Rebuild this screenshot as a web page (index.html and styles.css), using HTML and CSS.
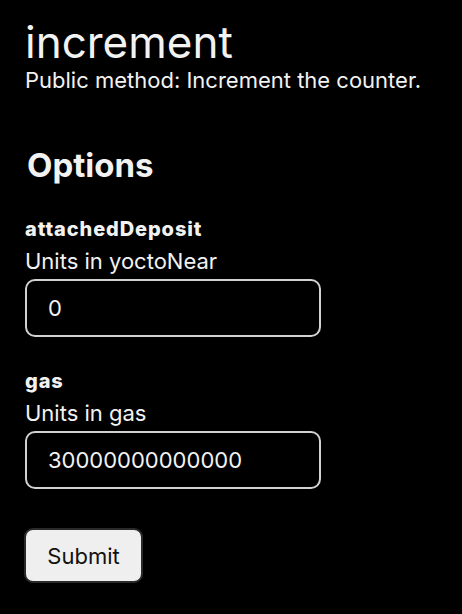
FILE: index.html
```html
<!DOCTYPE html>
<html>
<head>
<meta charset="utf-8">
<link rel="stylesheet" href="styles.css">
</head>
<body>
<main class="page">
  <header class="method">
    <h1 class="method-name">increment</h1>
    <p class="method-desc">Public method: Increment the counter.</p>
  </header>
  <section class="options">
    <h2 class="options-title">Options</h2>
    <div class="field">
      <label class="field-name" for="dep">attachedDeposit</label>
      <div class="field-hint">Units in yoctoNear</div>
      <input class="field-input" id="dep" type="text" value="0">
    </div>
    <div class="field">
      <label class="field-name" for="gas">gas</label>
      <div class="field-hint">Units in gas</div>
      <input class="field-input" id="gas" type="text" value="30000000000000">
    </div>
    <button class="submit" type="button">Submit</button>
  </section>
</main>
</body>
</html>
```
FILE: styles.css
```css
html, body {
  margin: 0;
  background: #000;
  color: #f2f2f2;
  font-family: Inter, "Noto Sans", sans-serif;
}
.page {
  padding: 18px 25px 20px 25px;
}
.method-name {
  margin: 0;
  font-size: 44px;
  font-weight: 400;
  line-height: 48px;
}
.method-desc {
  margin: 0;
  font-size: 22px;
  line-height: 28px;
}
.options {
  margin-top: 51px;
  display: flex;
  flex-direction: column;
  align-items: flex-start;
  gap: 33px;
}
.options-title {
  margin: 0 0 0 2px;
  font-size: 33px;
  font-weight: 700;
  line-height: 40px;
}
.field {
  display: flex;
  flex-direction: column;
}
.field-name {
  font-size: 20px;
  font-weight: 800;
  line-height: 23px;
  letter-spacing: 0.9px;
}
.field-hint {
  font-size: 22px;
  line-height: 28px;
  margin-top: 6px;
}
.field-input {
  box-sizing: border-box;
  width: 296px;
  height: 58px;
  margin-top: 4px;
  padding: 0 21px;
  background: #000;
  color: #f2f2f2;
  border: 2px solid #d2d2d2;
  border-radius: 10px;
  font-family: Inter, "Noto Sans", sans-serif;
  font-size: 22px;
  outline: none;
}
.submit {
  margin-top: 6px;
  margin-left: -1px;
  box-sizing: border-box;
  width: 119px;
  height: 55px;
  background: #efefef;
  color: #111;
  border: 2px solid #2a2a2a;
  border-radius: 9px;
  font-family: Inter, "Noto Sans", sans-serif;
  font-size: 22px;
  padding: 0;
}
```
